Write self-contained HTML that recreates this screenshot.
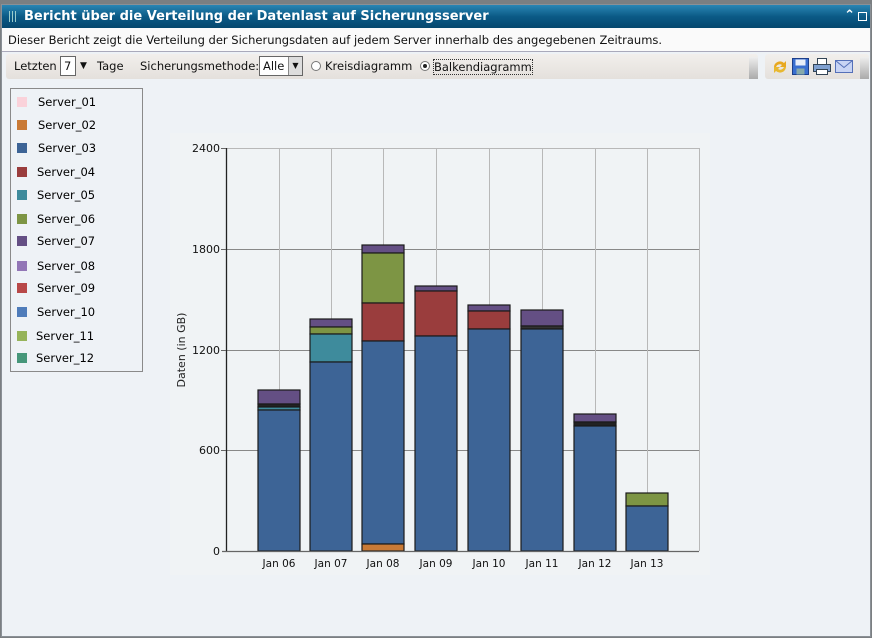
<!DOCTYPE html>
<html><head><meta charset="utf-8"><style>
*{margin:0;padding:0;box-sizing:border-box}
body{width:872px;height:638px;background:#7b7f82;font-family:"DejaVu Sans","Liberation Sans",sans-serif;overflow:hidden;position:relative}
.win{position:absolute;left:1px;top:4px;width:870px;height:633px;background:#eef2f6;border:1px solid #8a9096}
.title{position:absolute;left:0;top:0;width:868px;height:23px;background:linear-gradient(#2a86b4,#0b5a86 50%,#05476e);color:#fff;font-weight:bold;font-size:13px;line-height:23px;padding-left:22px}
.title:before{content:"";position:absolute;left:7px;top:6px;width:9px;height:11px;background:repeating-linear-gradient(90deg,#9cc 0 1px,transparent 1px 3px)}
.desc{position:absolute;left:0;top:23px;width:868px;height:24px;background:#fafafa;border-bottom:1px solid #aab;font-size:11.5px;line-height:24px;padding-left:6px;color:#111}
.tb{position:absolute;left:4px;top:49px;width:752px;height:25px;background:linear-gradient(#f2efec,#e4e0dc);border-radius:3px;font-size:11.5px;line-height:25px;color:#111}
.tb2{position:absolute;left:763px;top:49px;width:104px;height:25px;background:linear-gradient(#f2efec,#e4e0dc);border-radius:3px}
.sel{position:absolute;top:2px;height:20px;background:#fff;border:1px solid #666;line-height:18px;padding-left:3px}
.rad{position:absolute;top:7px;width:10px;height:10px;border-radius:50%;border:1px solid #777;background:#fff}
.legend{position:absolute;left:8px;top:83px;width:133px;height:284px;border:1px solid #8a8a8a;font-size:11.5px}
.legend div{position:absolute;left:6px;height:12px}
.legend i{position:absolute;left:0;top:0;width:10px;height:10px}
.legend span{position:absolute;left:21px;top:-2px;white-space:nowrap}
</style></head><body>
<div class="win">
<div class="title">Bericht über die Verteilung der Datenlast auf Sicherungsserver
<span style="position:absolute;right:15px;top:-1px;font-size:13px">&#8963;</span>
<span style="position:absolute;right:3px;top:7px;width:9px;height:9px;border:1.5px solid #fff"></span></div>
<div class="desc">Dieser Bericht zeigt die Verteilung der Sicherungsdaten auf jedem Server innerhalb des angegebenen Zeitraums.</div>
<div class="tb">
<span style="position:absolute;left:8px">Letzten</span>
<div class="sel" style="left:54px;width:16px">7</div>
<span style="position:absolute;left:74px;top:0;font-size:9px">&#9660;</span>
<span style="position:absolute;left:91px">Tage</span>
<span style="position:absolute;left:134px">Sicherungsmethode:</span>
<div class="sel" style="left:253px;width:44px">Alle<span style="position:absolute;right:0;top:0;width:14px;height:18px;background:#ddd;border-left:1px solid #888;font-size:8px;text-align:center">&#9660;</span></div>
<div class="rad" style="left:305px"></div><span style="position:absolute;left:319px">Kreisdiagramm</span>
<div class="rad" style="left:414px"><span style="position:absolute;left:2px;top:2px;width:4px;height:4px;border-radius:50%;background:#222"></span></div>
<span style="position:absolute;left:427px;top:5px;line-height:14px;border:1px dotted #333">Balkendiagramm</span>
<div style="position:absolute;right:0;top:3px;width:9px;height:22px;background:linear-gradient(#eee,#aaa)"></div>
</div>
<div class="tb2">
<svg style="position:absolute;left:6px;top:4px" width="18" height="18"><path d="M3 9a6 6 0 0 1 10-4l2-2v6h-6l2-2a4 4 0 0 0-6 2z" fill="#e8a820"/><path d="M15 9a6 6 0 0 1-10 4l-2 2v-6h6l-2 2a4 4 0 0 0 6-2z" fill="#e8b830"/></svg>
<svg style="position:absolute;left:27px;top:4px" width="17" height="17"><rect x="0.5" y="0.5" width="16" height="16" fill="#3a6fd0" stroke="#1d3f8a"/><rect x="3.5" y="1.5" width="10" height="6" fill="#e8eef8"/><rect x="4.5" y="10.5" width="8" height="6" fill="#8aa"/></svg>
<svg style="position:absolute;left:48px;top:4px" width="18" height="17"><rect x="4.5" y="0.5" width="9" height="6" fill="#fff" stroke="#345"/><rect x="0.5" y="6.5" width="17" height="7" fill="#7fa0d0" stroke="#345"/><rect x="3.5" y="11.5" width="11" height="5" fill="#fff" stroke="#345"/></svg>
<svg style="position:absolute;left:70px;top:6px" width="18" height="13"><rect x="0.5" y="0.5" width="17" height="12" fill="#c8d4f4" stroke="#5570b8"/><path d="M0.5 0.5l8.5 7 8.5-7" fill="none" stroke="#5570b8"/></svg>
<div style="position:absolute;right:0;top:3px;width:9px;height:22px;background:linear-gradient(#eee,#aaa)"></div>
</div>
<div class="legend">
<div style="top:8px"><i style="background:#fad2da"></i><span>Server_01</span></div>
<div style="top:31px"><i style="background:#c97a36"></i><span>Server_02</span></div>
<div style="top:54px"><i style="background:#3d6496"></i><span>Server_03</span></div>
<div style="top:78px"><i style="background:#9a3d3d"></i><span style="left:20px">Server_04</span></div>
<div style="top:101px"><i style="background:#3e8b9c"></i><span style="left:20px">Server_05</span></div>
<div style="top:125px"><i style="background:#7d9544"></i><span style="left:20px">Server_06</span></div>
<div style="top:147px"><i style="background:#644f84"></i><span style="left:20px">Server_07</span></div>
<div style="top:172px"><i style="background:#9276b6"></i><span style="left:20px">Server_08</span></div>
<div style="top:194px"><i style="background:#b84848"></i><span style="left:20px">Server_09</span></div>
<div style="top:218px"><i style="background:#4f7cba"></i><span style="left:20px">Server_10</span></div>
<div style="top:242px"><i style="background:#96b45a"></i><span style="left:19px">Server_11</span></div>
<div style="top:264px"><i style="background:#46977a"></i><span style="left:19px">Server_12</span></div>
</div>
</div>
<svg style="position:absolute;left:0;top:0" width="872" height="638" font-family="DejaVu Sans,Liberation Sans,sans-serif" font-size="11">
<rect x="170" y="133" width="540" height="442" fill="#f0f3f5"/>
<g stroke="#b8b8b8" stroke-width="1">
<line x1="226" y1="148.5" x2="699" y2="148.5"/><line x1="226" y1="249.5" x2="699" y2="249.5" stroke="#888"/><line x1="226" y1="350.5" x2="699" y2="350.5" stroke="#888"/><line x1="226" y1="450.5" x2="699" y2="450.5" stroke="#888"/>
<line x1="279.5" y1="148" x2="279.5" y2="551"/><line x1="331.5" y1="148" x2="331.5" y2="551"/><line x1="383.5" y1="148" x2="383.5" y2="551"/><line x1="436.5" y1="148" x2="436.5" y2="551"/><line x1="489.5" y1="148" x2="489.5" y2="551"/><line x1="542.5" y1="148" x2="542.5" y2="551"/><line x1="595.5" y1="148" x2="595.5" y2="551"/><line x1="647.5" y1="148" x2="647.5" y2="551"/><line x1="699.5" y1="148" x2="699.5" y2="551"/>
</g>
<g stroke="#1a1a1a" stroke-width="1.2">
<rect x="258" y="390" width="42" height="14" fill="#644f84"/><rect x="258" y="404" width="42" height="3" fill="#222"/><rect x="258" y="407" width="42" height="3" fill="#3e8b9c"/><rect x="258" y="410" width="42" height="141" fill="#3d6496"/>
<rect x="310" y="319" width="42" height="8" fill="#644f84"/><rect x="310" y="327" width="42" height="7" fill="#7d9544"/><rect x="310" y="334" width="42" height="28" fill="#3e8b9c"/><rect x="310" y="362" width="42" height="189" fill="#3d6496"/>
<rect x="362" y="245" width="42" height="8" fill="#644f84"/><rect x="362" y="253" width="42" height="50" fill="#7d9544"/><rect x="362" y="303" width="42" height="38" fill="#9a3d3d"/><rect x="362" y="341" width="42" height="203" fill="#3d6496"/><rect x="362" y="544" width="42" height="7" fill="#c97a36"/>
<rect x="415" y="286" width="42" height="5" fill="#644f84"/><rect x="415" y="291" width="42" height="45" fill="#9a3d3d"/><rect x="415" y="336" width="42" height="215" fill="#3d6496"/>
<rect x="468" y="305" width="42" height="6" fill="#644f84"/><rect x="468" y="311" width="42" height="18" fill="#9a3d3d"/><rect x="468" y="329" width="42" height="222" fill="#3d6496"/>
<rect x="521" y="310" width="42" height="16" fill="#644f84"/><rect x="521" y="326" width="42" height="3" fill="#333"/><rect x="521" y="329" width="42" height="222" fill="#3d6496"/>
<rect x="574" y="414" width="42" height="8" fill="#644f84"/><rect x="574" y="422" width="42" height="4" fill="#222"/><rect x="574" y="426" width="42" height="125" fill="#3d6496"/>
<rect x="626" y="493" width="42" height="13" fill="#7d9544"/><rect x="626" y="506" width="42" height="45" fill="#3d6496"/>
</g>
<line x1="226.5" y1="148" x2="226.5" y2="551" stroke="#222" stroke-width="1.3"/>
<line x1="222" y1="551.5" x2="699" y2="551.5" stroke="#666" stroke-width="1.3"/>
<g stroke="#666"><line x1="221" y1="148.5" x2="226" y2="148.5"/><line x1="221" y1="249.5" x2="226" y2="249.5"/><line x1="221" y1="350.5" x2="226" y2="350.5"/><line x1="221" y1="450.5" x2="226" y2="450.5"/></g>
<g text-anchor="end" fill="#111"><text x="220" y="152">2400</text><text x="220" y="253">1800</text><text x="220" y="354">1200</text><text x="220" y="454">600</text><text x="220" y="555">0</text></g>
<g text-anchor="middle" fill="#111" font-size="10.5"><text x="279" y="567">Jan 06</text><text x="331" y="567">Jan 07</text><text x="383" y="567">Jan 08</text><text x="436" y="567">Jan 09</text><text x="489" y="567">Jan 10</text><text x="542" y="567">Jan 11</text><text x="595" y="567">Jan 12</text><text x="647" y="567">Jan 13</text></g>
<text transform="translate(185,350) rotate(-90)" text-anchor="middle" fill="#222" font-size="11">Daten (in GB)</text>
</svg>
</body></html>
